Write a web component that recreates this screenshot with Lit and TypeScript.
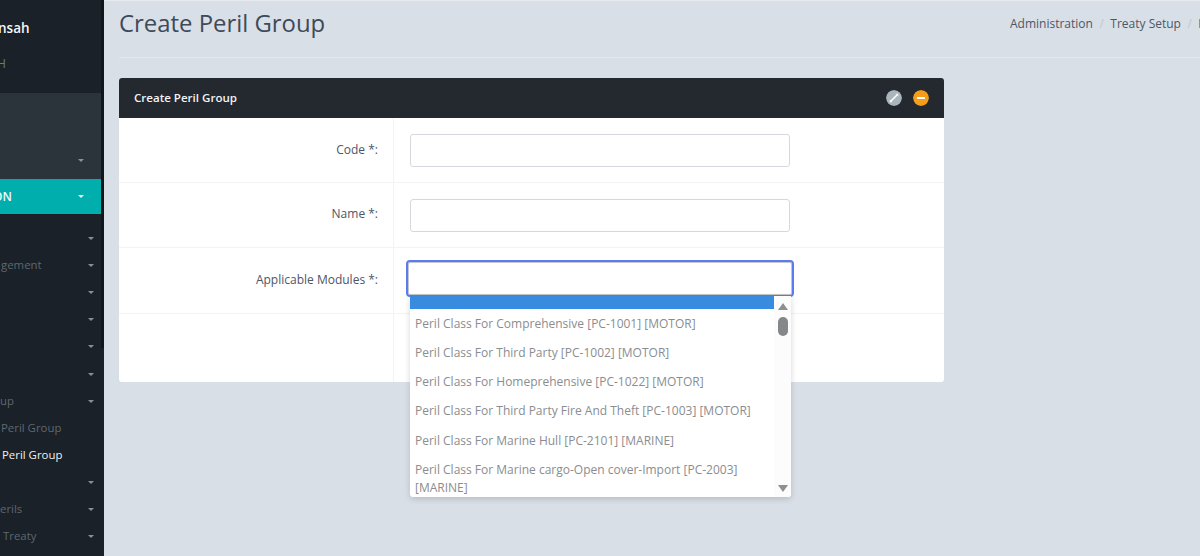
import { LitElement, html, css } from "lit";
import { customElement } from "lit/decorators.js";

const navItems: { text: string; shift: number; caret: boolean; cls?: string }[] = [
  { text: "", shift: 0, caret: true },
  { text: "gement", shift: 1, caret: true },
  { text: "", shift: 0, caret: true },
  { text: "", shift: 0, caret: true },
  { text: "", shift: 0, caret: true },
  { text: "", shift: 0, caret: true },
  { text: "up", shift: 0, caret: true },
  { text: "Peril Group", shift: 1, caret: false },
  { text: "Peril Group", shift: 2, caret: false, cls: "on" },
  { text: "s", shift: -6, caret: true },
  { text: "erils", shift: 0, caret: true },
  { text: "Treaty", shift: 3, caret: true },
];

const options = [
  "Peril Class For Comprehensive [PC-1001] [MOTOR]",
  "Peril Class For Third Party [PC-1002] [MOTOR]",
  "Peril Class For Homeprehensive [PC-1022] [MOTOR]",
  "Peril Class For Third Party Fire And Theft [PC-1003] [MOTOR]",
  "Peril Class For Marine Hull [PC-2101] [MARINE]",
  "Peril Class For Marine cargo-Open cover-Import [PC-2003] [MARINE]",
];

@customElement("app-root")
export class AppRoot extends LitElement {
  static styles = css`
    :host {
      display: block;
      width: 1200px;
      height: 556px;
      overflow: hidden;
      font-family: "Open Sans", "Liberation Sans", sans-serif;
      font-size: 12px;
      color: #4c5667;
    }
    * { box-sizing: border-box; }
    .page { display: flex; width: 1200px; height: 556px; background: #d9dfe7; }

    .side { flex: 0 0 104px; height: 556px; overflow: hidden; background: #1a2128; position: relative; display: flex; flex-direction: column; }
    .side::after { content: ""; position: absolute; right: 0; top: 0; width: 3px; height: 348px; background: #11161b; }
    .profile { height: 93px; flex: none; padding-top: 19px; background: #1a2128; }
    .name { font-size: 13.5px; line-height: 19px; font-weight: 600; color: #f4f6f8; margin-left: -2px; }
    .role { margin-top: 17px; font-size: 12px; line-height: 17px; color: #6e767e; margin-left: -3px; }
    .tools { height: 86px; flex: none; background: #2c343b; display: flex; justify-content: flex-end; align-items: flex-end; padding: 0 20px 17px 0; }
    .active { height: 35px; flex: none; width: 101px; background: #00aeae; display: flex; align-items: center; justify-content: space-between; padding-right: 17px; color: #eefafa; font-weight: 600; font-size: 12px; }
    .active span:first-child { margin-left: -7px; }
    .list { padding-top: 11px; display: flex; flex-direction: column; position: relative; z-index: 1; }
    .item { height: 27.1px; flex: none; display: flex; align-items: center; justify-content: space-between; padding-right: 10px; color: #5f676f; font-size: 11.4px; white-space: nowrap; }
    .item .txt { padding-bottom: 2px; }
    .item.on { color: #eef0f2; }
    .caret { width: 0; height: 0; border-left: 3.5px solid transparent; border-right: 3.5px solid transparent; border-top: 3.5px solid #8a9096; flex: none; margin-left: auto; }
    .active .caret { border-top-color: #e8f8f8; }

    .main { flex: 1; min-width: 0; padding: 1px 0 0 15px; border-top: 1px solid #e6e9ee; }
    .head { height: 56px; width: 1100px; display: flex; justify-content: space-between; align-items: flex-start; border-bottom: 1px solid #e4e8ee; }
    h1 { margin: 0; font-size: 23.9px; font-weight: 400; line-height: 42px; color: #3e4a59; }
    .crumbs { display: flex; padding-top: 13px; gap: 6.5px; font-size: 12px; line-height: 17px; color: #4c5667; white-space: nowrap; margin-right: -14px; width: 223px; overflow: hidden; flex: none; }
    .crumbs i { font-style: normal; color: #c3c9d1; }

    .card { margin-top: 20px; width: 825px; height: 304px; background: #fff; border-radius: 3px; display: flex; flex-direction: column; }
    .bar { height: 40px; flex: none; background: #24282f; border-radius: 3px 3px 0 0; display: flex; align-items: center; padding: 0 15px 1px 15px; color: #f2f4f6; font-size: 11.55px; font-weight: 600; }
    .bar b { font-weight: 600; flex: 1; }
    .dot { width: 16px; height: 16px; border-radius: 50%; margin-left: 11px; display: block; }
    .row { display: grid; grid-template-columns: 275px 1fr; flex: none; border-bottom: 1px solid #f1f3f5; }
    .row.r1 { height: 65px; }
    .row.r2 { height: 65px; }
    .row.r3 { height: 66px; }
    .row.r4 { flex: 1; border-bottom: 0; }
    .label { display: flex; align-items: center; justify-content: flex-end; padding: 0 15px 2px 0; border-right: 1px solid #f1f3f5; color: #4c5667; font-size: 12px; }
    .r2 .label { padding-bottom: 4px; }
    .field { display: flex; align-items: center; padding-left: 16px; position: relative; }
    .input { width: 380px; height: 33px; border: 1px solid #d5d9de; border-radius: 3px; background: #fff; }
    .focus { width: 388px; height: 37px; margin-left: -4px; margin-top: -4px; border: 2px solid #5b7cf0; border-radius: 4px; padding: 0; background: #fff; box-shadow: inset 0 0 0 1px #c4c6c9; }
    .drop { position: absolute; left: 16px; top: 48px; width: 381px; height: 201px; background: #fff; box-shadow: 0 2px 6px rgba(0,0,0,.16); display: flex; border-radius: 0 0 3px 3px; overflow: hidden; z-index: 3; }
    .opts { flex: 1; min-width: 0; display: flex; flex-direction: column; }
    .sel { height: 13.2px; flex: none; background: #378ce0; }
    .opt { padding: 5.6px 16px 5.6px 5px; line-height: 18px; color: #8a8d90; font-size: 12px; }
    .scroll { width: 17px; flex: none; background: #fcfcfc; position: relative; display: flex; flex-direction: column; align-items: center; padding-top: 7px; }
    .up { width: 0; height: 0; border-left: 5px solid transparent; border-right: 5px solid transparent; border-bottom: 7px solid #8d8f91; }
    .thumb { width: 10px; height: 19px; margin-top: 7px; background: #858789; border-radius: 5px; }
    .down { width: 0; height: 0; border-left: 5px solid transparent; border-right: 5px solid transparent; border-top: 7px solid #8d8f91; margin-top: auto; margin-bottom: 5px; }
  `;

  render() {
    return html`
      <div class="page">
        <aside class="side">
          <div class="profile">
            <div class="name">nsah</div>
            <div class="role">H</div>
          </div>
          <div class="tools"><span class="caret"></span></div>
          <div class="active"><span>ON</span><span class="caret"></span></div>
          <div class="list">
            ${navItems.map(
              (n) => html`<div class="item ${n.cls ?? ""}">
                <span class="txt" style="margin-left:${n.shift}px">${n.text}</span>
                ${n.caret ? html`<span class="caret"></span>` : ""}
              </div>`
            )}
          </div>
        </aside>
        <main class="main">
          <div class="head">
            <h1>Create Peril Group</h1>
            <div class="crumbs">
              <span>Administration</span><i>/</i><span>Treaty Setup</span><i>/</i><span>Peril Group</span>
            </div>
          </div>
          <section class="card">
            <div class="bar">
              <b>Create Peril Group</b>
              <svg class="dot" viewBox="0 0 16 16">
                <circle cx="8" cy="8" r="8" fill="#aab4bd" />
                <path d="M5 11 11 5" stroke="#fff" stroke-width="1.6" />
                <path d="M3.8 9.5v2.7h2.7zM12.2 6.5V3.8H9.5z" fill="#fff" />
              </svg>
              <svg class="dot" viewBox="0 0 16 16">
                <circle cx="8" cy="8" r="8" fill="#f59c1a" />
                <path d="M4.8 8h6.4" stroke="#fff" stroke-width="2" stroke-linecap="round" />
              </svg>
            </div>
            <div class="row r1"><div class="label">Code *:</div><div class="field"><div class="input"></div></div></div>
            <div class="row r2"><div class="label">Name *:</div><div class="field"><div class="input"></div></div></div>
            <div class="row r3">
              <div class="label">Applicable Modules *:</div>
              <div class="field">
                <div class="focus"></div>
                <div class="drop">
                  <div class="opts">
                    <div class="sel"></div>
                    ${options.map((o) => html`<div class="opt">${o}</div>`)}
                  </div>
                  <div class="scroll">
                    <span class="up"></span><span class="thumb"></span><span class="down"></span>
                  </div>
                </div>
              </div>
            </div>
            <div class="row r4"><div class="label"></div><div class="field"></div></div>
          </section>
        </main>
      </div>
    `;
  }
}
